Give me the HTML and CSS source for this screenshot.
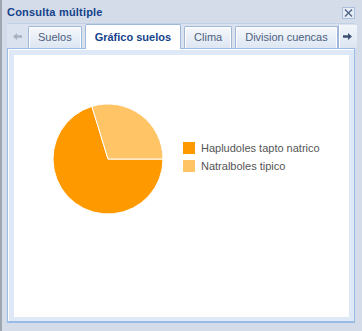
FILE: index.html
```html
<!DOCTYPE html>
<html lang="es">
<head>
    <meta charset="UTF-8">
    <title>Consulta múltiple</title>
    <link rel="stylesheet" href="styles.css">
</head>
<body>
<div class="win">
    <div class="win-head">
        <span class="win-title">Consulta múltiple</span>
        <span class="win-close">
            <svg width="11" height="10" viewBox="0 0 11 10">
                <path d="M2 1.5 L9 8.5 M9 1.5 L2 8.5" stroke="#4f6384" stroke-width="1.4" fill="none"/>
            </svg>
        </span>
    </div>

    <div class="tabs">
        <div class="tab-scroll left">
            <svg width="9" height="7" viewBox="0 0 9 7">
                <path d="M0 3.5 L4 0 L4 2.3 L9 2.3 L9 4.7 L4 4.7 L4 7 Z" fill="#a6b2c2"/>
            </svg>
        </div>
        <ul class="tab-list">
            <li class="tab">Suelos</li>
            <li class="tab active">Gráfico suelos</li>
            <li class="tab">Clima</li>
            <li class="tab">Division cuencas</li>
        </ul>
        <div class="tab-scroll right">
            <svg width="9" height="7" viewBox="0 0 9 7">
                <path d="M9 3.5 L5 0 L5 2.3 L0 2.3 L0 4.7 L5 4.7 L5 7 Z" fill="#3e5273"/>
            </svg>
        </div>
    </div>

    <div class="panel">
        <div class="panel-body">
            <div class="chart">
                <svg class="pie" width="112" height="112" viewBox="0 0 112 112">
                    <path d="M56 56 L111 56 A55 55 0 1 1 39.9 3.4 Z" fill="#ff9900" stroke="#fff" stroke-width="1"/>
                    <path d="M56 56 L39.9 3.4 A55 55 0 0 1 111 56 Z" fill="#ffc466" stroke="#fff" stroke-width="1"/>
                </svg>
                <ul class="legend">
                    <li><span class="swatch dark"></span>Hapludoles tapto natrico</li>
                    <li><span class="swatch light"></span>Natralboles tipico</li>
                </ul>
            </div>
        </div>
    </div>
</div>
</body>
</html>
```

FILE: styles.css
```css
*{
    box-sizing: border-box;
}
body{
    margin: 0;
    font-family: "Liberation Sans", Arial, sans-serif;
    font-size: 11px;
    background-color: #d3dce8;
}
.win{
    width: 362px;
    height: 331px;
    border-left: 2px solid #9ea6b0;
    padding: 0 7px 0 5px;
    background-color: #d3dce8;
}
.win-head{
    height: 23px;
    display: flex;
    align-items: center;
    justify-content: space-between;
}
.win-title{
    color: #15428b;
    font-weight: bold;
    font-size: 11px;
    letter-spacing: 0.2px;
    padding-top: 1px;
}
.win-close{
    width: 13px;
    height: 12px;
    margin-top: 2px;
    border: 1px solid #a9bfdc;
    background-color: #e6edf6;
    display: flex;
    align-items: center;
    justify-content: center;
}
.tabs{
    height: 25px;
    display: flex;
    align-items: flex-end;
    border-top: 1px solid #c2d2e6;
    background-color: #d9e2ee;
}
.tab-scroll{
    flex-shrink: 0;
    height: 23px;
    width: 19px;
    display: flex;
    align-items: center;
    justify-content: center;
}
.tab-scroll.left{
    width: 21px;
}
.tab-scroll.right{
    margin-left: auto;
    border-left: 1px solid #9fb8d9;
    box-shadow: inset 1px 0 0 #fff, -3px 0 0 -2px #9fb8d9;
    background: linear-gradient(#f2f6fb, #dbe5f1);
}
.tab-list{
    list-style: none;
    margin: 0;
    padding: 0;
    display: flex;
    align-items: flex-end;
    gap: 3px;
    flex-shrink: 0;
}
.tab{
    flex-shrink: 0;
    white-space: nowrap;
    height: 22px;
    line-height: 21px;
    padding: 0 9px;
    color: #4c5f80;
    border: 1px solid #9fb8d9;
    border-bottom: none;
    border-radius: 2px 2px 0 0;
    background: linear-gradient(#f5f8fc, #dde6f2);
    box-shadow: inset 1px 1px 0 #fff, inset -1px 0 0 #fff;
}
.tab.active{
    height: 25px;
    line-height: 25px;
    color: #15428b;
    font-weight: bold;
    background: #fff;
    margin-bottom: -1px;
    position: relative;
}
.panel{
    height: 275px;
    border: 1px solid #99bbe8;
    border-bottom-width: 2px;
    padding: 6px 5px 4px 6px;
    background-color: #dfe8f6;
    box-shadow: inset 1px 1px 0 #fff;
}
.panel-body{
    height: 100%;
    background-color: #fff;
    padding-top: 48px;
    padding-left: 38px;
}
.chart{
    display: flex;
    align-items: center;
    gap: 19px;
}
.pie{
    display: block;
}
.legend{
    list-style: none;
    margin: 0;
    padding: 0 0 4px;
    color: #555;
    font-size: 11px;
}
.legend li{
    display: flex;
    align-items: center;
    height: 18px;
}
.swatch{
    width: 12px;
    height: 12px;
    margin-right: 6px;
}
.swatch.dark{
    background-color: #ff9900;
}
.swatch.light{
    background-color: #ffc466;
}
```
